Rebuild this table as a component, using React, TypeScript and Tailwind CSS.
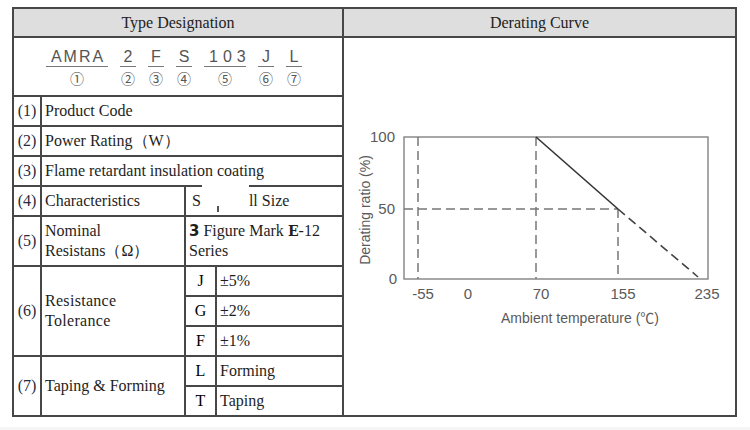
import React from 'react'

const serif = { fontFamily: '"Liberation Serif", "Times New Roman", serif' }

const parts = [
  { text: 'AMRA', mark: '①', w: 'w-[62px]', track: 'tracking-[2px] pl-[2px]' },
  { text: '2', mark: '②', w: 'w-[16px]', track: '' },
  { text: 'F', mark: '③', w: 'w-[16px]', track: '' },
  { text: 'S', mark: '④', w: 'w-[16px]', track: '' },
  { text: '103', mark: '⑤', w: 'w-[42px]', track: 'tracking-[5px] pl-[5px]' },
  { text: 'J', mark: '⑥', w: 'w-[16px]', track: '' },
  { text: 'L', mark: '⑦', w: 'w-[16px]', track: '' },
]

function Num({ n, className = '' }: { n: number; className?: string }) {
  return <div className={`bg-white flex items-center justify-center text-[#2a2a3a] ${className}`}>({n})</div>
}

function Cell({ children, className = '' }: { children: React.ReactNode; className?: string }) {
  return <div className={`bg-white flex items-center pl-[3px] text-[#1e1e1e] ${className}`}>{children}</div>
}

function DeratingChart() {
  const dash = '9 5'
  return (
    <svg width="391" height="377" viewBox="344 38 391 377" className="block">
      <rect x="404" y="137" width="304" height="142" fill="none" stroke="#8a8a8a" strokeWidth="1.5" />
      <line x1="418" y1="137" x2="418" y2="279" stroke="#777" strokeWidth="1.5" strokeDasharray={dash} />
      <line x1="536" y1="137" x2="536" y2="279" stroke="#777" strokeWidth="1.5" strokeDasharray={dash} />
      <line x1="618" y1="209" x2="618" y2="279" stroke="#777" strokeWidth="1.5" strokeDasharray={dash} />
      <line x1="404" y1="209" x2="618" y2="209" stroke="#777" strokeWidth="1.5" strokeDasharray={dash} />
      <line x1="536" y1="137" x2="618" y2="209" stroke="#333" strokeWidth="1.6" />
      <line x1="618" y1="209" x2="698" y2="277" stroke="#444" strokeWidth="1.6" strokeDasharray={dash} />
      <g fill="#5a5a5a" fontSize="15" fontFamily='"Liberation Sans", Arial, sans-serif'>
        <text x="395" y="142" textAnchor="end">100</text>
        <text x="395" y="214" textAnchor="end">50</text>
        <text x="397" y="284" textAnchor="end">0</text>
        <text x="423" y="299" textAnchor="middle">-55</text>
        <text x="468" y="299" textAnchor="middle">0</text>
        <text x="541" y="299" textAnchor="middle">70</text>
        <text x="623" y="299" textAnchor="middle">155</text>
        <text x="707" y="299" textAnchor="middle">235</text>
      </g>
      <g fill="#5a5a5a" fontSize="14" fontFamily='"Liberation Sans", Arial, "Noto Sans CJK JP", sans-serif'>
        <text x="580" y="323" textAnchor="middle">Ambient temperature (℃)</text>
        <text x="370" y="210" textAnchor="middle" transform="rotate(-90 370 210)">Derating ratio (%)</text>
      </g>
    </svg>
  )
}

export default function App() {
  return (
    <div className="w-[750px] h-[430px] bg-white flex flex-col" style={serif}>
      <div className="pl-[12px] pt-[7px]">
        <div className="grid grid-cols-[26px_142px_29px_125px_391px] grid-rows-[27px_57px_28px_28px_28px_28px_48px_28px_28px_28px_28px_28px] gap-[2px] p-[2px] bg-[#474747] w-fit text-[16px] leading-[20px]">
          <div className="col-span-4 bg-[#dedede] flex items-center justify-center text-[#222]">Type Designation</div>
          <div className="bg-[#dedede] flex items-center justify-center text-[#222]">Derating Curve</div>

          <div className="col-span-4 bg-white flex items-start pl-[32px] pt-[11px] gap-[12px]" style={{ fontFamily: '"Liberation Sans", Arial, sans-serif' }}>
            {parts.map(p => (
              <div key={p.mark} className={`flex flex-col items-center ${p.w}`}>
                <span className={`text-[16px] leading-[16px] text-[#555] border-b-[1.5px] border-[#777] pb-[1px] w-full text-center ${p.track}`}>{p.text}</span>
                <span className="text-[14px] leading-[14px] mt-[4px] text-[#555]" style={{ fontFamily: '"Noto Sans CJK JP", sans-serif' }}>{p.mark}</span>
              </div>
            ))}
          </div>
          <div className="row-span-11 bg-white">
            <DeratingChart />
          </div>

          <Num n={1} />
          <Cell className="col-span-3">Product Code</Cell>

          <Num n={2} />
          <Cell className="col-span-3">Power Rating（W）</Cell>

          <Num n={3} />
          <Cell className="col-span-3">Flame retardant insulation coating</Cell>

          <Num n={4} />
          <Cell>Characteristics</Cell>
          <Cell className="col-span-2 relative pl-[6px]">
            S<span className="inline-block w-[48px]" />ll Size
            <div className="absolute left-[16px] top-[-2px] w-[47px] h-[21px] bg-white" />
            <div className="absolute left-[31px] top-[19px] w-[1.5px] h-[6px] bg-[#555]" />
          </Cell>

          <Num n={5} />
          <Cell className="flex-col !items-start justify-center">
            <span>Nominal</span>
            <span>Resistans（Ω）</span>
          </Cell>
          <Cell className="col-span-2 flex-col !items-start justify-center">
            <span>
              <b className="font-bold text-[15px]" style={{ fontFamily: '"DejaVu Sans", sans-serif' }}>3</b> Figure Mark{' '}
              <b className="font-bold text-[14px]" style={{ fontFamily: '"DejaVu Serif", serif' }}>E</b>-12
            </span>
            <span>Series</span>
          </Cell>

          <Num n={6} className="row-span-3" />
          <Cell className="row-span-3 flex-col !items-start justify-center tracking-[0.3px]">
            <span>Resistance</span>
            <span>Tolerance</span>
          </Cell>
          <div className="bg-white flex items-center justify-center">J</div>
          <Cell>±5%</Cell>
          <div className="bg-white flex items-center justify-center">G</div>
          <Cell>±2%</Cell>
          <div className="bg-white flex items-center justify-center">F</div>
          <Cell>±1%</Cell>

          <Num n={7} className="row-span-2" />
          <Cell className="row-span-2">Taping &amp; Forming</Cell>
          <div className="bg-white flex items-center justify-center">L</div>
          <Cell>Forming</Cell>
          <div className="bg-white flex items-center justify-center">T</div>
          <Cell>Taping</Cell>
        </div>
      </div>
      <div className="flex-1" />
      <div className="h-[3px] bg-[#f6f6f6]" />
    </div>
  )
}
